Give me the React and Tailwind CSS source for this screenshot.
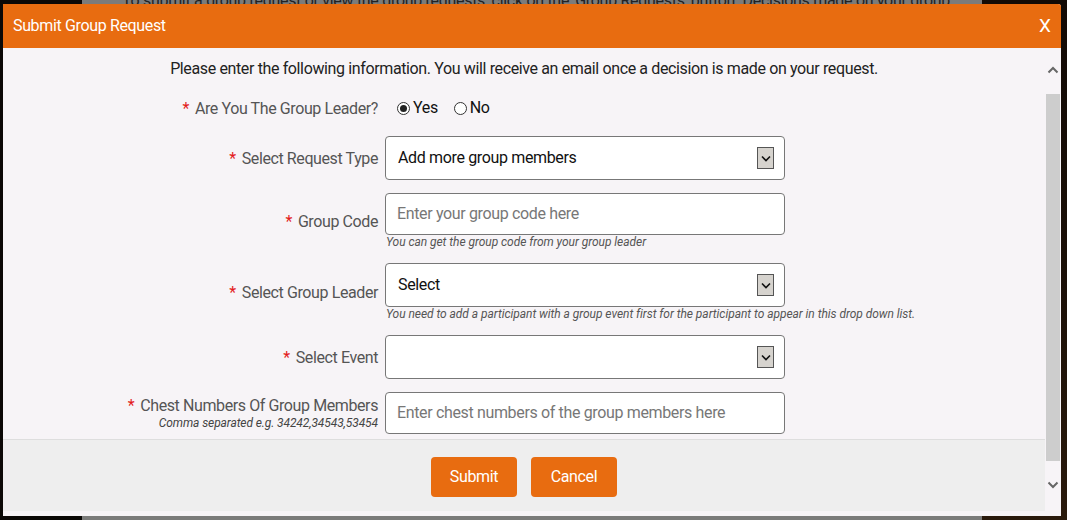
import React from 'react';

const font = { fontFamily: 'Roboto, "Liberation Sans", sans-serif' };

const Arrow = () => (
  <span className="flex items-center justify-center w-[17px] h-[22px] bg-[#d6d3ce] border border-[#555]">
    <svg width="10" height="7" viewBox="0 0 10 7">
      <path d="M1 1.5 L5 5.5 L9 1.5" fill="none" stroke="#111" strokeWidth="1.6" />
    </svg>
  </span>
);

const Label = ({ children, sub }) => (
  <div className="flex flex-col items-end text-right">
    <div className="text-[16px] leading-[19px] text-[#555] tracking-[-0.4px]">
      <span className="text-[#e31b1b] mr-[6px]">*</span>
      {children}
    </div>
    {sub && <div className="text-[12px] leading-[16px] italic text-[#444] tracking-[-0.1px]">{sub}</div>}
  </div>
);

const Select = ({ value }) => (
  <div className="w-[400px] h-[44px] bg-white border border-[#777] rounded-[4px] flex items-center justify-between pl-[12px] pr-[10px]">
    <span className="text-[16px] text-[#111] tracking-[-0.35px]">{value}</span>
    <Arrow />
  </div>
);

const Input = ({ placeholder }) => (
  <div className="w-[400px] h-[42px] bg-white border border-[#777] rounded-[4px] flex items-center px-[11px]">
    <span className="text-[16px] text-[#777] tracking-[-0.35px]">{placeholder}</span>
  </div>
);

const Help = ({ children }) => (
  <div className="text-[12px] leading-[15px] italic text-[#555] pl-[1px] tracking-[-0.05px]">{children}</div>
);

const Radio = ({ checked, label }) => (
  <label className="flex items-center gap-[3px] text-[16px] text-[#111] tracking-[-0.35px]">
    <span className="w-[13px] h-[13px] rounded-full border border-[#333] bg-white flex items-center justify-center">
      {checked && <span className="w-[7px] h-[7px] rounded-full bg-[#222]" />}
    </span>
    {label}
  </label>
);

const Row = ({ label, sub, children }) => (
  <div className="grid grid-cols-[375px_400px] gap-x-[7px] items-center mb-[13px]">
    <Label sub={sub}>{label}</Label>
    <div>{children}</div>
  </div>
);

export default function App() {
  return (
    <div className="relative w-[1067px] h-[520px] overflow-hidden bg-black" style={font}>
      {/* backdrop */}
      <div className="flex h-full">
        <div className="w-[82px] bg-[#0b0806]" />
        <div className="w-[900px] bg-[#7b7b7a]">
          <p className="mt-[-11px] pl-[40px] text-[16px] text-[#222] whitespace-nowrap tracking-[-0.3px]">
            To submit a group request or view the group requests, click on the 'Group Requests' button. Decisions made on your group
          </p>
        </div>
        <div className="flex-1 bg-gradient-to-b from-[#120a05] via-[#1a0f07] to-[#2a1a0c]" />
      </div>

      {/* modal */}
      <div className="absolute left-[3px] top-[4px] w-[1058px] h-[512px] flex flex-col bg-[#f7f4f7] rounded-tr-[3px] overflow-hidden">
        <div className="h-[44px] shrink-0 bg-[#e86c10] flex items-center justify-between pl-[10px] pr-[10px]">
          <span className="text-white text-[16px] tracking-[-0.35px]">Submit Group Request</span>
          <span className="text-white text-[19px]">X</span>
        </div>

        <div className="flex flex-1 min-h-0">
          <div className="flex-1 flex flex-col">
            <p className="text-center text-[16px] text-[#222] pt-[11px] leading-[20px] tracking-[-0.37px]">
              Please enter the following information. You will receive an email once a decision is made on your request.
            </p>

            <div className="pt-[17px]">
              <div className="grid grid-cols-[375px_400px] gap-x-[19px] items-center h-[20px] mb-[20px]">
                <Label>Are You The Group Leader?</Label>
                <div className="flex items-center gap-[16px]">
                  <Radio checked label="Yes" />
                  <Radio label="No" />
                </div>
              </div>

              <Row label="Select Request Type">
                <Select value="Add more group members" />
              </Row>

              <Row label="Group Code">
                <Input placeholder="Enter your group code here" />
                <Help>You can get the group code from your group leader</Help>
              </Row>

              <Row label="Select Group Leader">
                <Select value="Select" />
                <div className="w-[600px]">
                  <Help>You need to add a participant with a group event first for the participant to appear in this drop down list.</Help>
                </div>
              </Row>

              <Row label="Select Event">
                <Select value="" />
              </Row>

              <div className="grid grid-cols-[375px_400px] gap-x-[7px] items-center">
                <Label sub="Comma separated e.g. 34242,34543,53454">Chest Numbers Of Group Members</Label>
                <Input placeholder="Enter chest numbers of the group members here" />
              </div>
            </div>

            <div className="mt-[5px] h-[72px] bg-[#eeeeee] border-t border-[#dedede] flex justify-center gap-[14px] pt-[17px]">
              <button className="w-[86px] h-[40px] rounded-[4px] bg-[#e86c10] text-white text-[16px] tracking-[-0.35px]">Submit</button>
              <button className="w-[86px] h-[40px] rounded-[4px] bg-[#e86c10] text-white text-[16px] tracking-[-0.35px]">Cancel</button>
            </div>
          </div>

          {/* scrollbar */}
          <div className="w-[16px] flex flex-col items-center">
            <svg width="12" height="8" viewBox="0 0 12 8" className="mt-[18px]">
              <path d="M1.5 6.5 L6 2 L10.5 6.5" fill="none" stroke="#666" strokeWidth="2" />
            </svg>
            <div className="mt-[20px] w-[14px] h-[367px] bg-[#cdcdcd]" />
            <svg width="12" height="8" viewBox="0 0 12 8" className="mt-[20px]">
              <path d="M1.5 1.5 L6 6 L10.5 1.5" fill="none" stroke="#666" strokeWidth="2" />
            </svg>
          </div>
        </div>
      </div>
    </div>
  );
}
